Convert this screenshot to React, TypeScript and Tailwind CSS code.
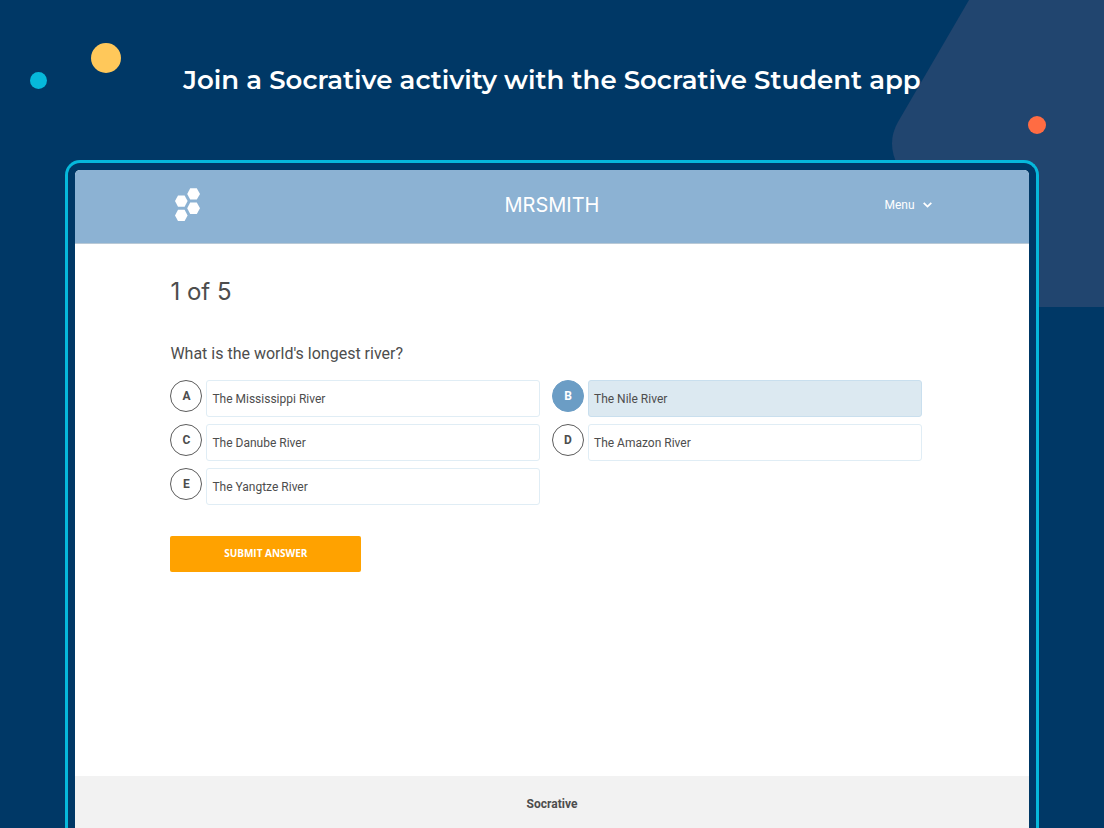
import { useState } from "react";

const answers = [
  { id: "A", text: "The Mississippi River" },
  { id: "B", text: "The Nile River" },
  { id: "C", text: "The Danube River" },
  { id: "D", text: "The Amazon River" },
  { id: "E", text: "The Yangtze River" },
];

function Logo() {
  return (
    <svg viewBox="0 0 25 33" className="h-[33px] w-[25px]" fill="#fff" role="img" aria-label="Socrative">
      <path d="M15.2 0.2h6.6L25 6l-3.2 5.6h-6.6L12.2 6z" />
      <path d="M15.2 14.5h6.6l3.2 5.7-3.2 5.7h-6.6l-3-5.7z" />
      <path d="M3 7.4h6.6l3 5.7-3 5.7H3L0 13.1z" />
      <path d="M3 21.7h6.6l3 5.7-3 5.6H3L0 27.4z" />
    </svg>
  );
}

function Backdrop() {
  return (
    <div className="pointer-events-none absolute inset-0" aria-hidden="true">
      <svg className="absolute right-0 top-0" width="212" height="307" viewBox="0 0 212 307" fill="#21456f">
        <path d="M77 0 6 122Q-6 143 6 166L78 290Q88 307 108 307H212V0z" />
      </svg>
      <span className="absolute left-[91px] top-[43px] size-[30px] rounded-full bg-[#ffc85a]" />
      <span className="absolute left-[30px] top-[72px] size-[17px] rounded-full bg-[#06b8db]" />
      <span className="absolute right-[58px] top-[116px] size-[18px] rounded-full bg-[#ff6c43]" />
    </div>
  );
}

export default function App() {
  const [selected, setSelected] = useState("B");

  return (
    <div className="relative flex min-h-screen flex-col overflow-hidden bg-[#003866] font-['Roboto',sans-serif] text-[#4d4d4d]">
      <Backdrop />

      <header className="relative flex h-40 items-center justify-center">
        <h1 className="text-center font-['Montserrat','Inter',sans-serif] text-[26px] font-semibold leading-9 text-white">
          Join a Socrative activity with the Socrative Student app
        </h1>
      </header>

      <div className="relative mx-[65px] flex flex-1 flex-col rounded-t-[15px] border-[3px] border-b-0 border-[#06b8db] bg-[#003866] px-[7px] pt-[7px]">
        <div className="flex flex-1 flex-col overflow-hidden rounded-t-[5px] bg-white">
          <div className="border-b border-[#b9c9d6] bg-[#8cb2d3] text-white">
            <div className="mx-auto grid h-[73px] w-4/5 grid-cols-3 items-center pb-1">
              <div className="pl-[5px]">
                <Logo />
              </div>
              <h2 className="text-center font-['Inter',sans-serif] text-[20px] leading-6">MRSMITH</h2>
              <button type="button" className="flex items-center gap-2 justify-self-end pr-[2px] text-[12px] leading-4">
                Menu
                <svg width="9" height="6" viewBox="0 0 9 6" fill="none" stroke="currentColor" strokeWidth="1.8" aria-hidden="true">
                  <path d="m0.7 0.8 3.8 3.8 3.8-3.8" />
                </svg>
              </button>
            </div>
          </div>

          <main className="mx-auto w-4/5 flex-1 pt-8">
            <h3 className="font-['Inter',sans-serif] text-[24px] leading-8">1 of 5</h3>

            <form onSubmit={(e) => e.preventDefault()}>
              <fieldset>
                <legend className="pb-4 pt-9 text-[16px] leading-5">What is the world's longest river?</legend>
                <div className="grid grid-cols-2 gap-y-[7px]">
                  {answers.map(({ id, text }) => (
                    <div key={id} className="flex gap-1 pr-3">
                      <div className="grid size-8 shrink-0 place-items-center">
                        <input
                          type="radio"
                          name="answer"
                          id={"answer-" + id}
                          checked={selected === id}
                          onChange={() => setSelected(id)}
                          className="peer col-start-1 row-start-1 size-8 appearance-none rounded-full border border-[#5c5c5c] bg-white checked:border-[#6b9dc5] checked:bg-[#6b9dc5]"
                        />
                        <span className="pointer-events-none relative col-start-1 row-start-1 text-[12px] font-bold leading-4 peer-checked:text-white">
                          {id}
                        </span>
                      </div>
                      <label
                        htmlFor={"answer-" + id}
                        className={
                          selected === id
                            ? "flex h-[37px] flex-1 items-center rounded-[3px] border border-[#c9dfee] bg-[#dce9f1] px-[5px] text-[12px] leading-4"
                            : "flex h-[37px] flex-1 items-center rounded-[3px] border border-[#e0edf5] bg-white px-[5px] text-[12px] leading-4"
                        }
                      >
                        {text}
                      </label>
                    </div>
                  ))}
                </div>
              </fieldset>
              <button
                type="submit"
                className="mt-[31px] h-9 w-1/4 rounded-[2px] bg-[#ffa200] pb-[2px] font-['Open_Sans',sans-serif] text-[10px] font-bold leading-4 text-white"
              >
                SUBMIT ANSWER
              </button>
            </form>
          </main>

          <footer className="h-[52px] bg-[#f2f2f2] pt-4 text-center text-[12px] font-bold leading-6">Socrative</footer>
        </div>
      </div>
    </div>
  );
}
